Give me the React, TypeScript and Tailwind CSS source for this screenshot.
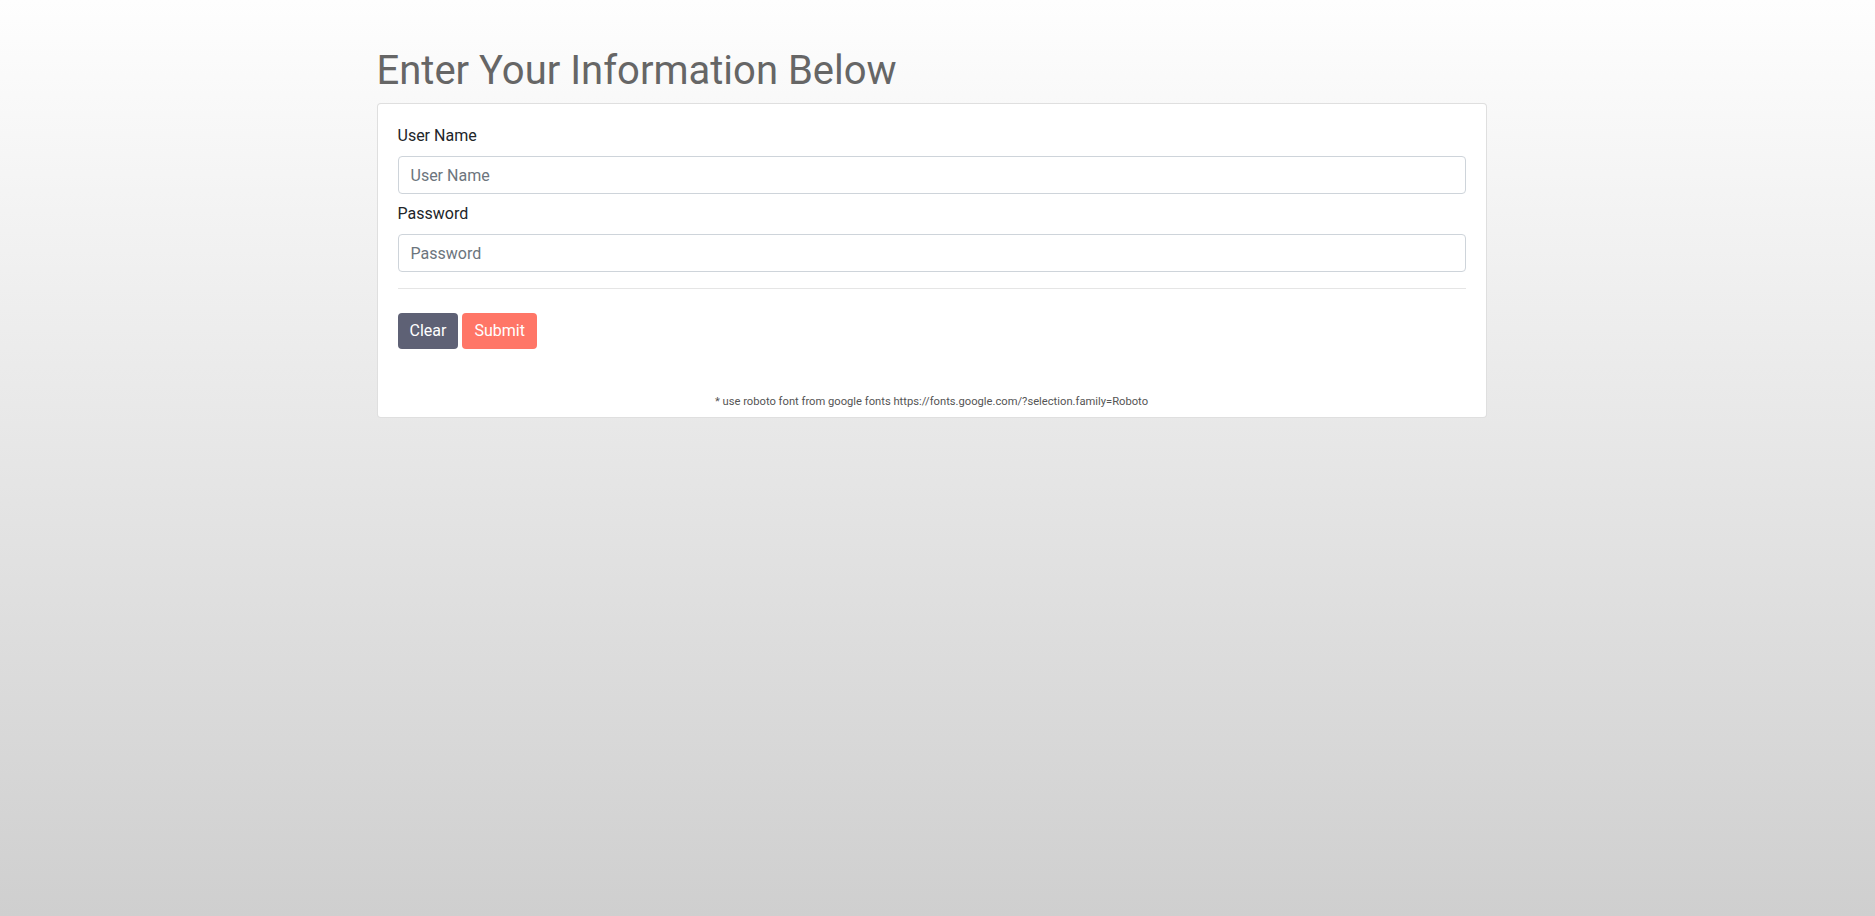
import React from 'react'

export default function App() {
  return (
    <div
      className="min-h-screen w-full bg-gradient-to-b from-[#fefefe] to-[#cfcfcf] pr-3"
      style={{ fontFamily: 'Roboto, "Liberation Sans", sans-serif' }}
    >
      <div className="mx-auto w-[1110px] pt-[47px]">
        <h1 className="mb-2 text-[40px] leading-[48px] font-normal text-[#666666]">
          Enter Your Information Below
        </h1>
        <div className="rounded border border-[rgba(0,0,0,0.125)] bg-white">
          <form className="px-5 pt-5 pb-[6px]" onSubmit={(e) => e.preventDefault()}>
            <label htmlFor="username" className="mb-2 block text-base leading-6 text-[#212529]">
              User Name
            </label>
            <input
              id="username"
              type="text"
              placeholder="User Name"
              className="block h-[38px] w-full rounded border border-[#ced4da] px-3 text-base text-[#495057] placeholder:text-[#6c757d] focus:outline-none"
            />
            <label htmlFor="password" className="mt-2 mb-2 block text-base leading-6 text-[#212529]">
              Password
            </label>
            <input
              id="password"
              type="password"
              placeholder="Password"
              className="block h-[38px] w-full rounded border border-[#ced4da] px-3 text-base text-[#495057] placeholder:text-[#6c757d] focus:outline-none"
            />
            <hr className="my-4 border-t border-[rgba(0,0,0,0.1)]" />
            <div className="mt-6 flex gap-1">
              <button
                type="reset"
                className="h-9 rounded bg-[#5e6175] px-3 text-base text-white"
              >
                Clear
              </button>
              <button
                type="submit"
                className="h-9 rounded bg-[#ff7667] px-3 text-base text-white"
              >
                Submit
              </button>
            </div>
            <p className="mt-[45px] text-center text-[11.2px] leading-[16.5px] text-[#555555]">
              * use roboto font from google fonts https://fonts.google.com/?selection.family=Roboto
            </p>
          </form>
        </div>
      </div>
    </div>
  )
}
